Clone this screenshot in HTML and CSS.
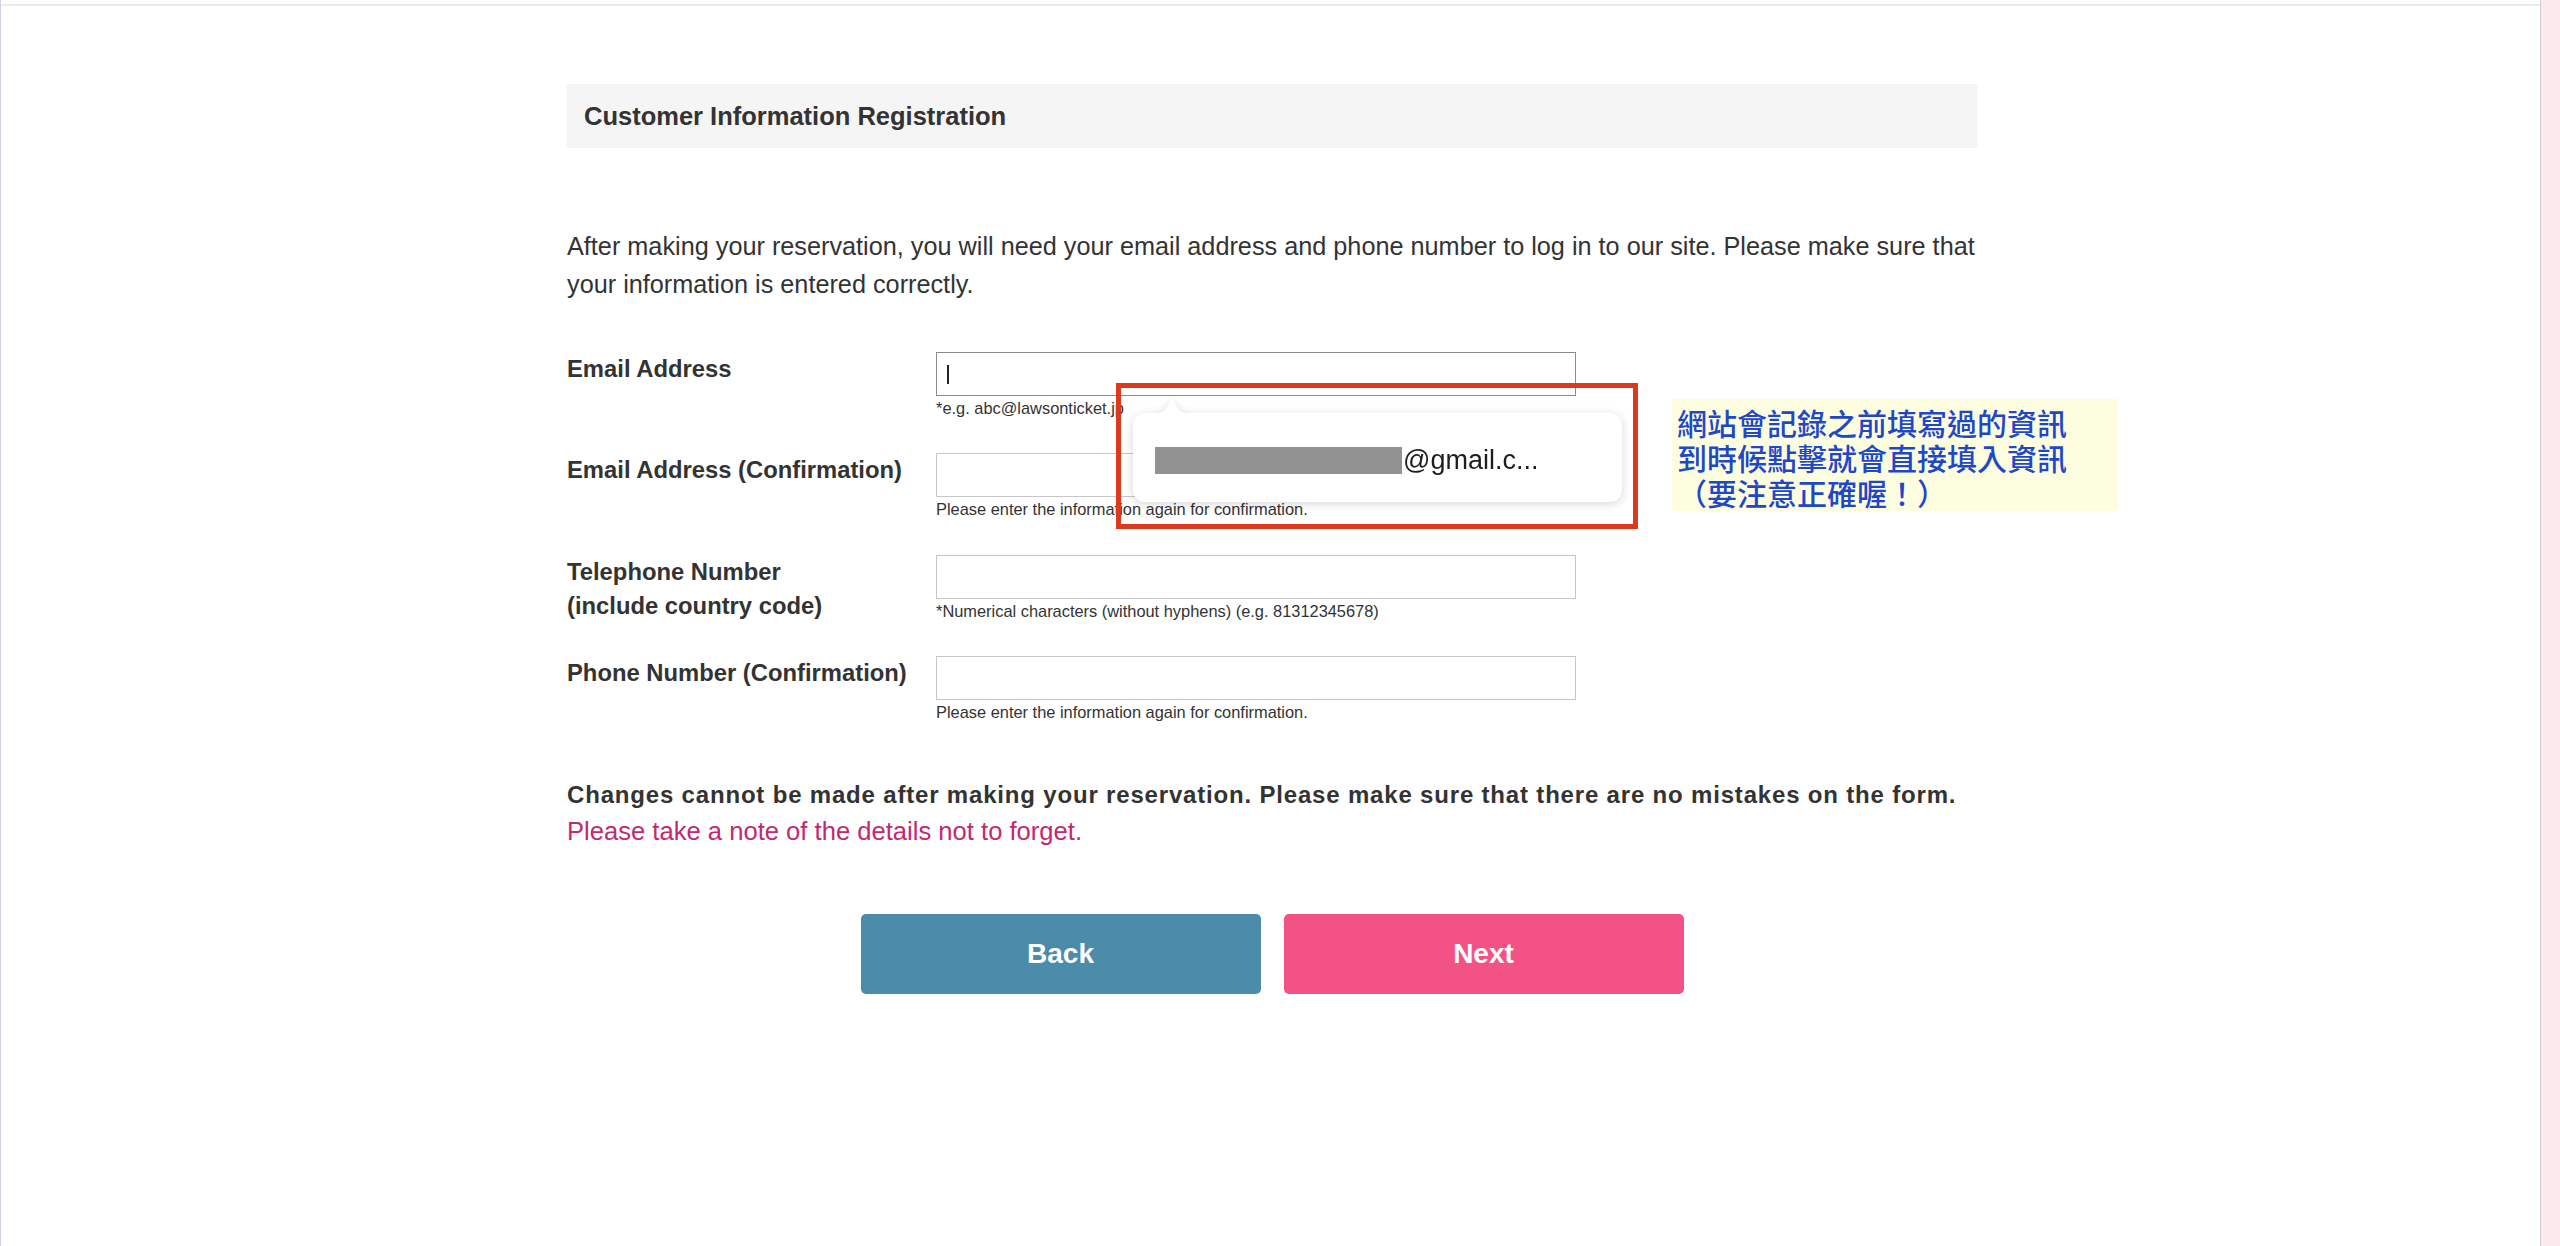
FILE: index.html
```html
<!DOCTYPE html>
<html lang="en">
<head>
<meta charset="utf-8">
<title>Customer Information Registration</title>
<link rel="stylesheet" href="styles.css">
</head>
<body>
<div class="window">
  <div class="main">
    <div class="topbar"></div>
    <div class="content">
      <div class="title-bar">Customer Information Registration</div>
      <p class="intro">After making your reservation, you will need your email address and phone number to log in to our site. Please make sure that<br>your information is entered correctly.</p>

      <div class="form">
        <div class="row">
          <div class="label">Email Address</div>
          <div class="field">
            <div class="input-wrap">
              <input class="input focused" type="text">
              <span class="caret"></span>
            </div>
            <div class="hint">*e.g. abc@lawsonticket.jp</div>
          </div>
        </div>
        <div class="row">
          <div class="label">Email Address (Confirmation)</div>
          <div class="field">
            <input class="input" type="text">
            <div class="hint">Please enter the information again for confirmation.</div>
          </div>
        </div>
        <div class="row">
          <div class="label">Telephone Number<br>(include country code)</div>
          <div class="field">
            <input class="input" type="text">
            <div class="hint">*Numerical characters (without hyphens) (e.g. 81312345678)</div>
          </div>
        </div>
        <div class="row">
          <div class="label">Phone Number (Confirmation)</div>
          <div class="field">
            <input class="input" type="text">
            <div class="hint">Please enter the information again for confirmation.</div>
          </div>
        </div>

        <div class="autofill">
          <svg class="autofill-arrow" width="40" height="16" viewBox="0 0 40 16"><path d="M0 16 C10 16 14 12 17 5 Q20 -1 23 5 C26 12 30 16 40 16 Z" fill="#fff"/></svg>
          <div class="autofill-item"><span class="redact"></span><span class="autofill-text">@gmail.c...</span></div>
        </div>
        <div class="highlight"></div>
        <div class="annotation">網站會記錄之前填寫過的資訊<br>到時候點擊就會直接填入資訊<br>（要注意正確喔！）</div>
      </div>

      <div class="notice">
        <div class="notice-strong">Changes cannot be made after making your reservation. Please make sure that there are no mistakes on the form.</div>
        <div class="notice-pink">Please take a note of the details not to forget.</div>
      </div>

      <div class="buttons">
        <button class="btn btn-back" type="button">Back</button>
        <button class="btn btn-next" type="button">Next</button>
      </div>
    </div>
  </div>
  <div class="scrollstrip"></div>
</div>
</body>
</html>
```

FILE: styles.css
```css
html, body {
  margin: 0;
  padding: 0;
  background: #fff;
}

body {
  font-family: "Liberation Sans", Arial, sans-serif;
  color: #333;
}

.window {
  display: flex;
  min-height: 1246px;
}

.main {
  flex: 1;
  border-left: 1px solid #d4cde6;
  padding-left: 3px;
  background: #fff;
}

.scrollstrip {
  width: 19px;
  background: #fce9ee;
  border-left: 1px solid #cfcfcf;
}

.topbar {
  height: 4px;
  margin-left: -3px;
  border-bottom: 2px solid #ebebeb;
}

.content {
  width: 1410px;
  margin: 0 auto;
  padding-top: 78px;
}

.title-bar {
  height: 64px;
  background: #f5f5f5;
  padding-left: 17px;
  display: flex;
  align-items: center;
  font-weight: bold;
  font-size: 25.5px;
  color: #333;
}

.intro {
  margin: 79px 0 0;
  font-size: 25.25px;
  line-height: 38px;
  white-space: nowrap;
}

.form {
  position: relative;
  margin-top: 49px;
  display: flex;
  flex-direction: column;
  gap: 33.3px;
}

.row {
  display: grid;
  grid-template-columns: 369px 640px;
  height: 68px;
}

.label {
  font-weight: bold;
  font-size: 23.8px;
  line-height: 34px;
  color: #333;
}

.field {
  display: flex;
  flex-direction: column;
}

.input-wrap {
  position: relative;
}

.input {
  display: block;
  box-sizing: border-box;
  width: 640px;
  height: 44px;
  margin: 0;
  border: 1px solid #c6c6c6;
  border-radius: 0;
  background: #fff;
  outline: none;
  font-family: inherit;
  font-size: 20px;
}

.input.focused {
  border-color: #8c8c8c;
}

.caret {
  position: absolute;
  left: 11px;
  top: 13px;
  width: 2px;
  height: 19px;
  background: #222;
}

.hint {
  font-size: 16.4px;
  line-height: 24px;
  color: #333;
  white-space: nowrap;
}

.autofill {
  position: absolute;
  left: 566px;
  top: 61px;
  width: 489px;
  height: 89px;
  filter: drop-shadow(0 2px 5px rgba(0, 0, 0, 0.16));
  z-index: 2;
}

.autofill-arrow {
  position: absolute;
  left: 19px;
  top: -15px;
  display: block;
}

.autofill-item {
  box-sizing: border-box;
  height: 100%;
  background: #fff;
  border-radius: 12px;
  padding: 6px 0 0 22px;
  display: flex;
  align-items: center;
}

.redact {
  width: 247px;
  height: 27px;
  background: #929292;
}

.autofill-text {
  font-size: 27px;
  color: #1e1e1e;
  margin-left: 1px;
}

.highlight {
  position: absolute;
  left: 549px;
  top: 31px;
  width: 522px;
  height: 146px;
  box-sizing: border-box;
  border: 5px solid #dc391d;
  z-index: 3;
}

.annotation {
  position: absolute;
  left: 1105px;
  top: 47px;
  width: 446px;
  height: 112px;
  box-sizing: border-box;
  padding: 6px 0 0 5px;
  background: #fdfde0;
  color: #1e48c8;
  font-family: "Noto Sans CJK TC", "Noto Sans CJK SC", sans-serif;
  font-weight: 500;
  font-size: 30px;
  line-height: 35px;
  white-space: nowrap;
}

.notice {
  margin-top: 52px;
  line-height: 37px;
}

.notice-strong {
  font-weight: bold;
  font-size: 24px;
  letter-spacing: 0.82px;
  color: #333;
  white-space: nowrap;
}

.notice-pink {
  font-size: 25.6px;
  color: #c4286e;
}

.buttons {
  display: flex;
  justify-content: center;
  gap: 23px;
  margin-top: 64px;
}

.btn {
  width: 400px;
  height: 80px;
  border: none;
  border-radius: 5px;
  color: #fff;
  font-family: "Liberation Sans", Arial, sans-serif;
  font-weight: bold;
  font-size: 28px;
  cursor: pointer;
}

.btn-back {
  background: #4a8ca9;
}

.btn-next {
  background: #f25384;
}
```
